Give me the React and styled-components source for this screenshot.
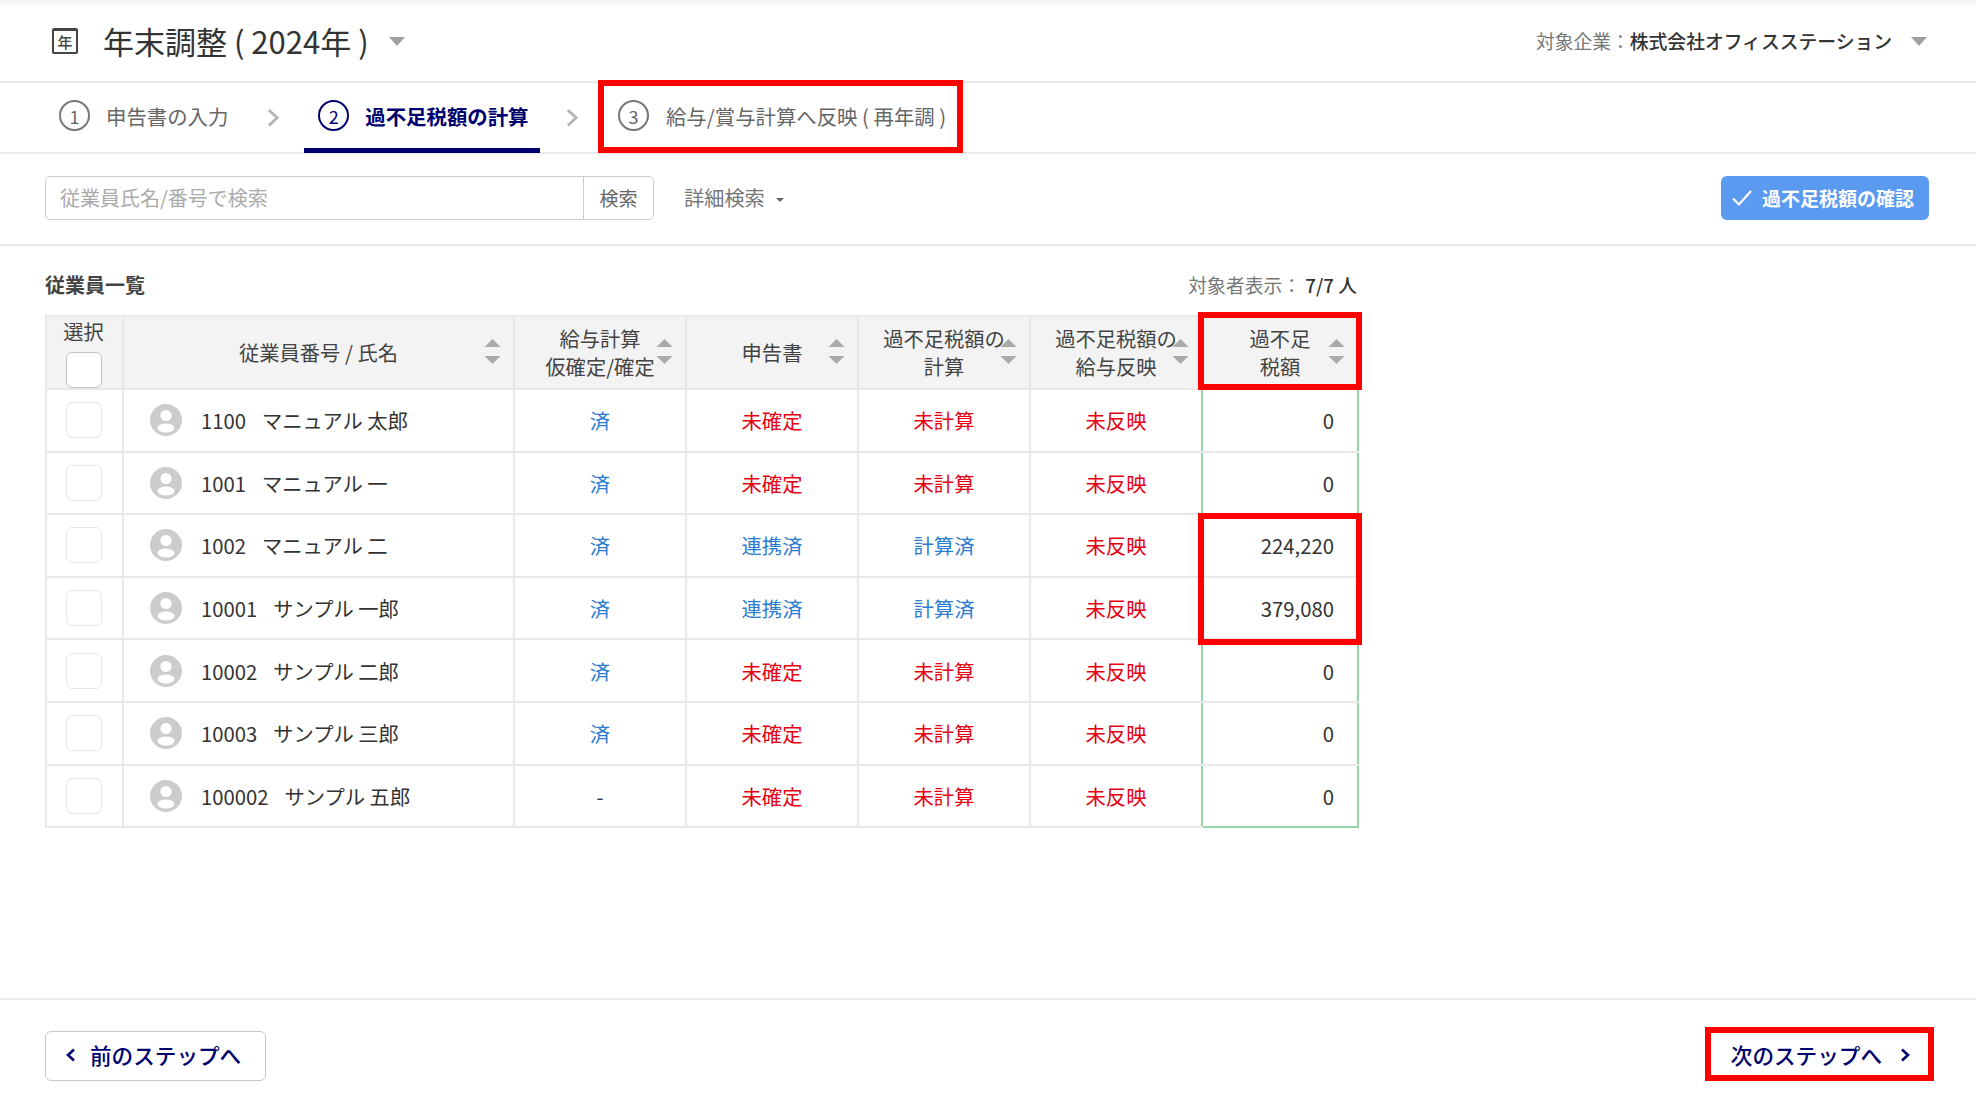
import styled, { createGlobalStyle } from 'styled-components';

const GlobalStyle = createGlobalStyle`
  html, body {
    margin: 0;
    padding: 0;
    background: #fff;
  }
  body {
    font-family: "Noto Sans CJK JP", "Noto Sans", sans-serif;
    color: #333;
    overflow: hidden;
  }
`;

const Page = styled.div`
  width: 1976px;
  height: 1117px;
  display: flex;
  flex-direction: column;
`;

const Header = styled.header`
  height: 81px;
  flex: none;
  display: flex;
  align-items: center;
  justify-content: space-between;
  padding: 0 49px 0 52px;
  border-bottom: 2px solid #e9e9e9;
  background: linear-gradient(#f3f3f3 0, #fff 7px);
`;

const TitleGroup = styled.div`
  display: flex;
  align-items: center;
`;

const YearIcon = styled.span`
  width: 26px;
  height: 26px;
  box-sizing: border-box;
  display: flex;
  align-items: center;
  justify-content: center;
  border: 2px solid #444;
  border-top-width: 3px;
  border-radius: 2px;
  font-size: 15px;
  font-weight: 500;
  line-height: 1;
  color: #444;
  margin-right: 25px;
`;

const Title = styled.h1`
  margin: 0;
  font-size: 31px;
  font-weight: 400;
  line-height: 44px;
  color: #333;
  white-space: nowrap;
`;

const Caret = styled.span`
  width: 0;
  height: 0;
  border-left: 8px solid transparent;
  border-right: 8px solid transparent;
  border-top: 9px solid #a0a0a0;
  margin-left: ${(p) => p.$gap}px;
  margin-top: 2px;
`;

const CompanyGroup = styled.div`
  display: flex;
  align-items: center;
  font-size: 18.8px;
  white-space: nowrap;
  color: #777;
`;

const CompanyName = styled.span`
  color: #333;
  font-weight: 500;
`;

const StepBar = styled.nav`
  height: 69px;
  flex: none;
  display: flex;
  padding-left: 45px;
  border-bottom: 2px solid #e9e9e9;
`;

const Step = styled.div`
  position: relative;
  display: flex;
  align-items: center;
  gap: ${(p) => p.$gap}px;
  padding: 0 ${(p) => p.$end}px 0 14px;
  font-size: 20.4px;
  font-weight: ${(p) => (p.$active ? 700 : 400)};
  color: ${(p) => (p.$active ? '#00006e' : '#666')};
  border-bottom: 5px solid ${(p) => (p.$active ? '#00006e' : 'transparent')};
  margin-bottom: -1px;
  white-space: nowrap;
`;

const StepNumber = styled.span`
  width: 31px;
  height: 31px;
  box-sizing: border-box;
  display: flex;
  align-items: center;
  justify-content: center;
  border: 2px solid ${(p) => (p.$active ? '#00006e' : '#777')};
  border-radius: 50%;
  font-size: 18px;
  font-weight: 400;
  line-height: 1;
`;

const StepArrow = styled.span`
  width: ${(p) => p.$width}px;
  display: flex;
  align-items: center;
  justify-content: center;
  color: #b5b5b5;
`;

const Highlight = styled.span`
  position: absolute;
  box-sizing: border-box;
  border: 6px solid #fe0000;
  pointer-events: none;
  z-index: 2;
  top: ${(p) => p.$top}px;
  left: ${(p) => p.$left}px;
  right: ${(p) => p.$right}px;
  ${(p) => (p.$height ? `height: ${p.$height}px;` : `bottom: ${p.$bottom}px;`)}
`;

const SearchBar = styled.div`
  height: 87px;
  flex: none;
  display: flex;
  align-items: center;
  padding: 0 47px 3px 45px;
  border-bottom: 2px solid #e9e9e9;
`;

const SearchBox = styled.div`
  width: 609px;
  height: 44px;
  box-sizing: border-box;
  display: flex;
  border: 1.5px solid #ccc;
  border-radius: 5px;
`;

const SearchInput = styled.input`
  flex: 1;
  min-width: 0;
  border: 0;
  outline: 0;
  padding: 0 14px;
  background: transparent;
  font: inherit;
  font-size: 20px;
  &::placeholder {
    color: #aaa;
    opacity: 1;
  }
`;

const SearchButton = styled.button`
  width: 70px;
  border: 0;
  border-left: 1px solid #ccc;
  background: #fff;
  border-radius: 0 5px 5px 0;
  font: inherit;
  font-size: 19px;
  color: #666;
  padding: 0;
`;

const DetailLink = styled.span`
  display: flex;
  align-items: center;
  gap: 11px;
  margin-left: 30px;
  font-size: 20.2px;
  color: #777;
`;

const TinyCaret = styled.span`
  width: 0;
  height: 0;
  border-left: 4px solid transparent;
  border-right: 4px solid transparent;
  border-top: 4px solid #666;
  margin-top: 4px;
`;

const ConfirmButton = styled.button`
  margin-left: auto;
  width: 208px;
  height: 44px;
  display: flex;
  align-items: center;
  gap: 9px;
  border: 0;
  border-radius: 6px;
  background: #5a9af0;
  color: #fff;
  font: inherit;
  font-size: 19px;
  font-weight: 700;
  padding: 0 0 0 10px;
  white-space: nowrap;
`;

const Main = styled.main`
  flex: 1;
  padding: 0 0 0 45px;
`;

const TableWrap = styled.div`
  width: 1312px;
`;

const ListHead = styled.div`
  height: 69px;
  display: flex;
  align-items: center;
  justify-content: space-between;
  padding-top: 7px;
  box-sizing: border-box;
`;

const ListTitle = styled.h2`
  margin: 0;
  font-size: 20px;
  font-weight: 700;
  color: #444;
`;

const ListCount = styled.div`
  font-size: 18.8px;
  color: #777;
`;

const CountValue = styled.span`
  color: #333;
  font-weight: 500;
`;

const Table = styled.table`
  width: 1312px;
  table-layout: fixed;
  border-collapse: collapse;
  font-size: 20.3px;
`;

const HeadCell = styled.th`
  position: relative;
  height: 73px;
  box-sizing: border-box;
  padding: 0;
  background: #f3f3f3;
  border: 2px solid #e8e8e8;
  font-weight: 400;
  line-height: 28px;
  color: #444;
  text-align: center;
`;

const HeadLabel = styled.div`
  margin-bottom: 2px;
`;

const SelectHead = styled.div`
  display: flex;
  flex-direction: column;
  align-items: center;
  gap: 7px;
  line-height: 28px;
  transform: translateX(-1px);
`;

const Row = styled.tr`
  height: 62.6px;
`;

const Cell = styled.td`
  position: relative;
  box-sizing: border-box;
  padding: 0;
  border: 2px solid #e8e8e8;
  ${(p) => p.$edge && 'border-right-color: #97d4a8;'}
  text-align: center;
  color: ${(p) => (p.$tone === 'red' ? '#e60012' : p.$tone === 'blue' ? '#2b7cd3' : '#333')};
`;

const AmountCell = styled.td`
  position: relative;
  box-sizing: border-box;
  padding: 0 23px 0 0;
  border: 2px solid #e8e8e8;
  border-left-color: #97d4a8;
  border-right-color: #97d4a8;
  ${(p) => p.$last && 'border-bottom-color: #97d4a8;'}
  text-align: right;
  color: #333;
`;

const Checkbox = styled.span`
  display: block;
  width: 36px;
  height: 36px;
  box-sizing: border-box;
  margin: 0 auto;
  background: #fff;
  border-radius: 6px;
  border: ${(p) => (p.$head ? '1.5px solid #c4c4c4' : '1.5px solid #e8e8e8')};
  ${(p) => !p.$head && 'transform: translateX(-1px);'}
`;

const Employee = styled.div`
  display: flex;
  align-items: center;
  padding-left: 26px;
  white-space: nowrap;
`;

const Avatar = styled.svg`
  width: 32px;
  height: 32px;
  flex: none;
  margin-right: 19px;
`;

const EmployeeNo = styled.span`
  margin-right: 16px;
`;

const SortMark = styled.svg`
  position: absolute;
  right: 12px;
  top: 21px;
  width: 17px;
  height: 26px;
`;

const Footer = styled.footer`
  height: 119px;
  flex: none;
  box-sizing: border-box;
  display: flex;
  justify-content: space-between;
  align-items: flex-start;
  padding: 31px 45px 0;
  border-top: 2px solid #e9e9e9;
`;

const StepButton = styled.button`
  position: relative;
  height: 50px;
  box-sizing: border-box;
  display: flex;
  align-items: center;
  padding: ${(p) => (p.$next ? '0 20px 3px 24px' : '0 24px 3px 20px')};
  gap: ${(p) => (p.$next ? 18 : 14)}px;
  background: #fff;
  border: 1.5px solid #c8c8c8;
  border-radius: 6px;
  color: #00006e;
  font-family: "Noto Sans CJK JP", sans-serif;
  font-size: 21.6px;
  font-weight: 500;
  white-space: nowrap;
`;

const SortIcon = () => (
  <SortMark viewBox="0 0 17 26">
    <polygon points="8.5,1 16.5,9 0.5,9" fill="#aaa" />
    <polygon points="0.5,18 16.5,18 8.5,26" fill="#aaa" />
  </SortMark>
);

const PersonIcon = () => (
  <Avatar viewBox="0 0 32 32">
    <circle cx="16" cy="16" r="16" fill="#ccc" />
    <circle cx="16" cy="11.5" r="5.6" fill="#fff" />
    <ellipse cx="16" cy="24" rx="8.5" ry="4.6" fill="#fff" />
  </Avatar>
);

const Chevron = ({ dir = 'right', size = 14, color = '#00006e', width = 2.6 }) => (
  <svg width={size} height={size * 1.4} viewBox="0 0 10 14" fill="none">
    <path
      d={dir === 'right' ? 'M2 1.5 L8 7 L2 12.5' : 'M8 1.5 L2 7 L8 12.5'}
      stroke={color}
      strokeWidth={width}
    />
  </svg>
);

const columns = [
  { key: 'select', width: 77 },
  { key: 'name', width: 391, label: ['従業員番号 / 氏名'] },
  { key: 'payroll', width: 172, label: ['給与計算', '仮確定/確定'] },
  { key: 'form', width: 172, label: ['申告書'] },
  { key: 'calc', width: 172, label: ['過不足税額の', '計算'] },
  { key: 'reflect', width: 172, label: ['過不足税額の', '給与反映'] },
  { key: 'amount', width: 156, label: ['過不足', '税額'] },
];

const employees = [
  { no: '1100', name: 'マニュアル 太郎', payroll: '済', form: '未確定', calc: '未計算', reflect: '未反映', amount: '0' },
  { no: '1001', name: 'マニュアル 一', payroll: '済', form: '未確定', calc: '未計算', reflect: '未反映', amount: '0' },
  { no: '1002', name: 'マニュアル 二', payroll: '済', form: '連携済', calc: '計算済', reflect: '未反映', amount: '224,220' },
  { no: '10001', name: 'サンプル 一郎', payroll: '済', form: '連携済', calc: '計算済', reflect: '未反映', amount: '379,080' },
  { no: '10002', name: 'サンプル 二郎', payroll: '済', form: '未確定', calc: '未計算', reflect: '未反映', amount: '0' },
  { no: '10003', name: 'サンプル 三郎', payroll: '済', form: '未確定', calc: '未計算', reflect: '未反映', amount: '0' },
  { no: '100002', name: 'サンプル 五郎', payroll: '-', form: '未確定', calc: '未計算', reflect: '未反映', amount: '0' },
];

const toneOf = (value) => {
  if (value === '-') return undefined;
  return value.startsWith('未') ? 'red' : 'blue';
};

const App = () => {
  return (
    <>
      <GlobalStyle />
      <Page>
        <Header>
          <TitleGroup>
            <YearIcon>年</YearIcon>
            <Title>年末調整 ( 2024年 )</Title>
            <Caret $gap={20} />
          </TitleGroup>
          <CompanyGroup>
            対象企業：<CompanyName>株式会社オフィスステーション</CompanyName>
            <Caret $gap={19} />
          </CompanyGroup>
        </Header>

        <StepBar>
          <Step $gap={16} $end={14}>
            <StepNumber>1</StepNumber>
            申告書の入力
          </Step>
          <StepArrow $width={62}>
            <Chevron color="#b5b5b5" size={14} width={2} />
          </StepArrow>
          <Step $active $gap={16} $end={12}>
            <StepNumber $active>2</StepNumber>
            過不足税額の計算
          </Step>
          <StepArrow $width={63.5}>
            <Chevron color="#b5b5b5" size={14} width={2} />
          </StepArrow>
          <Step $gap={17} $end={14}>
            <StepNumber>3</StepNumber>
            給与/賞与計算へ反映 ( 再年調 )
            <Highlight $top={-3} $left={-6} $right={-3} $bottom={-5} />
          </Step>
        </StepBar>

        <SearchBar>
          <SearchBox>
            <SearchInput placeholder="従業員氏名/番号で検索" />
            <SearchButton>検索</SearchButton>
          </SearchBox>
          <DetailLink>
            詳細検索
            <TinyCaret />
          </DetailLink>
          <ConfirmButton>
            <svg width="22" height="18" viewBox="0 0 22 18" fill="none">
              <path d="M2 9.5 L8 15.5 L20 2" stroke="#fff" strokeWidth="2.2" />
            </svg>
            過不足税額の確認
          </ConfirmButton>
        </SearchBar>

        <Main>
          <TableWrap>
            <ListHead>
              <ListTitle>従業員一覧</ListTitle>
              <ListCount>
                対象者表示： <CountValue>7/7 人</CountValue>
              </ListCount>
            </ListHead>
            <Table>
              <colgroup>
                {columns.map((col) => (
                  <col key={col.key} style={{ width: col.width }} />
                ))}
              </colgroup>
              <thead>
                <tr>
                  {columns.map((col) => (
                    <HeadCell key={col.key}>
                      {col.key === 'select' ? (
                        <SelectHead>
                          選択
                          <Checkbox $head />
                        </SelectHead>
                      ) : (
                        <>
                          <HeadLabel>
                            {col.label.map((line) => (
                              <div key={line}>{line}</div>
                            ))}
                          </HeadLabel>
                          <SortIcon />
                        </>
                      )}
                      {col.key === 'amount' && <Highlight $top={-5} $left={-5} $right={-5} $bottom={-2} />}
                    </HeadCell>
                  ))}
                </tr>
              </thead>
              <tbody>
                {employees.map((emp, i) => (
                  <Row key={emp.no}>
                    <Cell>
                      <Checkbox />
                    </Cell>
                    <Cell>
                      <Employee>
                        <PersonIcon />
                        <EmployeeNo>{emp.no}</EmployeeNo>
                        {emp.name}
                      </Employee>
                    </Cell>
                    <Cell $tone={toneOf(emp.payroll)}>{emp.payroll}</Cell>
                    <Cell $tone={toneOf(emp.form)}>{emp.form}</Cell>
                    <Cell $tone={toneOf(emp.calc)}>{emp.calc}</Cell>
                    <Cell $tone={toneOf(emp.reflect)} $edge>{emp.reflect}</Cell>
                    <AmountCell $last={i === employees.length - 1}>
                      {emp.amount}
                      {i === 2 && <Highlight $top={-2} $left={-5} $right={-5} $height={132} />}
                    </AmountCell>
                  </Row>
                ))}
              </tbody>
            </Table>
          </TableWrap>
        </Main>

        <Footer>
          <StepButton>
            <Chevron dir="left" size={10} />
            前のステップへ
          </StepButton>
          <StepButton $next>
            次のステップへ
            <Chevron size={10} />
            <Highlight $top={-5} $left={-2} $right={-4} $bottom={-1} />
          </StepButton>
        </Footer>
      </Page>
    </>
  );
};

export default App;
